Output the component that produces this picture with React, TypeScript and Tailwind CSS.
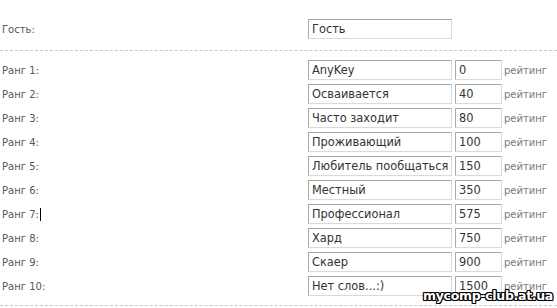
const ranks = [
  { name: 'AnyKey', points: '0' },
  { name: 'Осваивается', points: '40' },
  { name: 'Часто заходит', points: '80' },
  { name: 'Проживающий', points: '100' },
  { name: 'Любитель пообщаться', points: '150' },
  { name: 'Местный', points: '350' },
  { name: 'Профессионал', points: '575' },
  { name: 'Хард', points: '750' },
  { name: 'Скаер', points: '900' },
  { name: 'Нет слов...:)', points: '1500' },
]

const inputCls =
  'h-[20px] border border-t-[#a9a9a9] border-l-[#a9a9a9] border-r-[#dadada] border-b-[#dadada] bg-white px-[3px] text-[11.4px] leading-[18px] text-[#333] outline-none'

function Field({ value, w }: { value: string; w: string }) {
  return <input readOnly value={value} className={`${inputCls} ${w}`} />
}

export default function App() {
  return (
    <div
      className="relative h-[308px] w-[557px] overflow-hidden bg-white"
      style={{ fontFamily: '"DejaVu Sans", Verdana, sans-serif' }}
    >
      <div className="pt-[18px]">
        {/* гость */}
        <div className="flex h-[22px] items-center">
          <div className="w-[308px] pl-[2px] text-[10px] text-[#555]">Гость:</div>
          <Field value="Гость" w="w-[144px]" />
        </div>

        <div className="mt-[10px] border-t border-dashed border-[#c8c8c8]" />

        <div className="pt-[7px]">
          {ranks.map((r, i) => (
            <div key={i} className="flex h-[24px] items-center">
              <div className="flex w-[308px] items-center pl-[2px] text-[10px] text-[#555]">
                Ранг {i + 1}:
                {i === 6 && <span className="ml-[1px] inline-block h-[13px] w-px bg-black" />}
              </div>
              <Field value={r.name} w="w-[144px]" />
              <Field value={r.points} w="ml-[3px] w-[47px]" />
              <span className="ml-[2px] text-[10px] text-[#7a7a7a]">рейтинг</span>
            </div>
          ))}
        </div>

        <div className="mt-[7px] border-t border-dashed border-[#c8c8c8]" />
      </div>

      {/* водяной знак */}
      <div
        className="absolute right-[4px] top-[289px] text-[12.5px] font-bold leading-[14px] tracking-[-0.3px] text-white"
        style={{
          textShadow:
            '1px 0 0 #000, -1px 0 0 #000, 0 1px 0 #000, 0 -1px 0 #000, 1px 1px 0 #000, -1px -1px 0 #000, 1px -1px 0 #000, -1px 1px 0 #000',
        }}
      >
        mycomp-club.at.ua
      </div>
    </div>
  )
}
